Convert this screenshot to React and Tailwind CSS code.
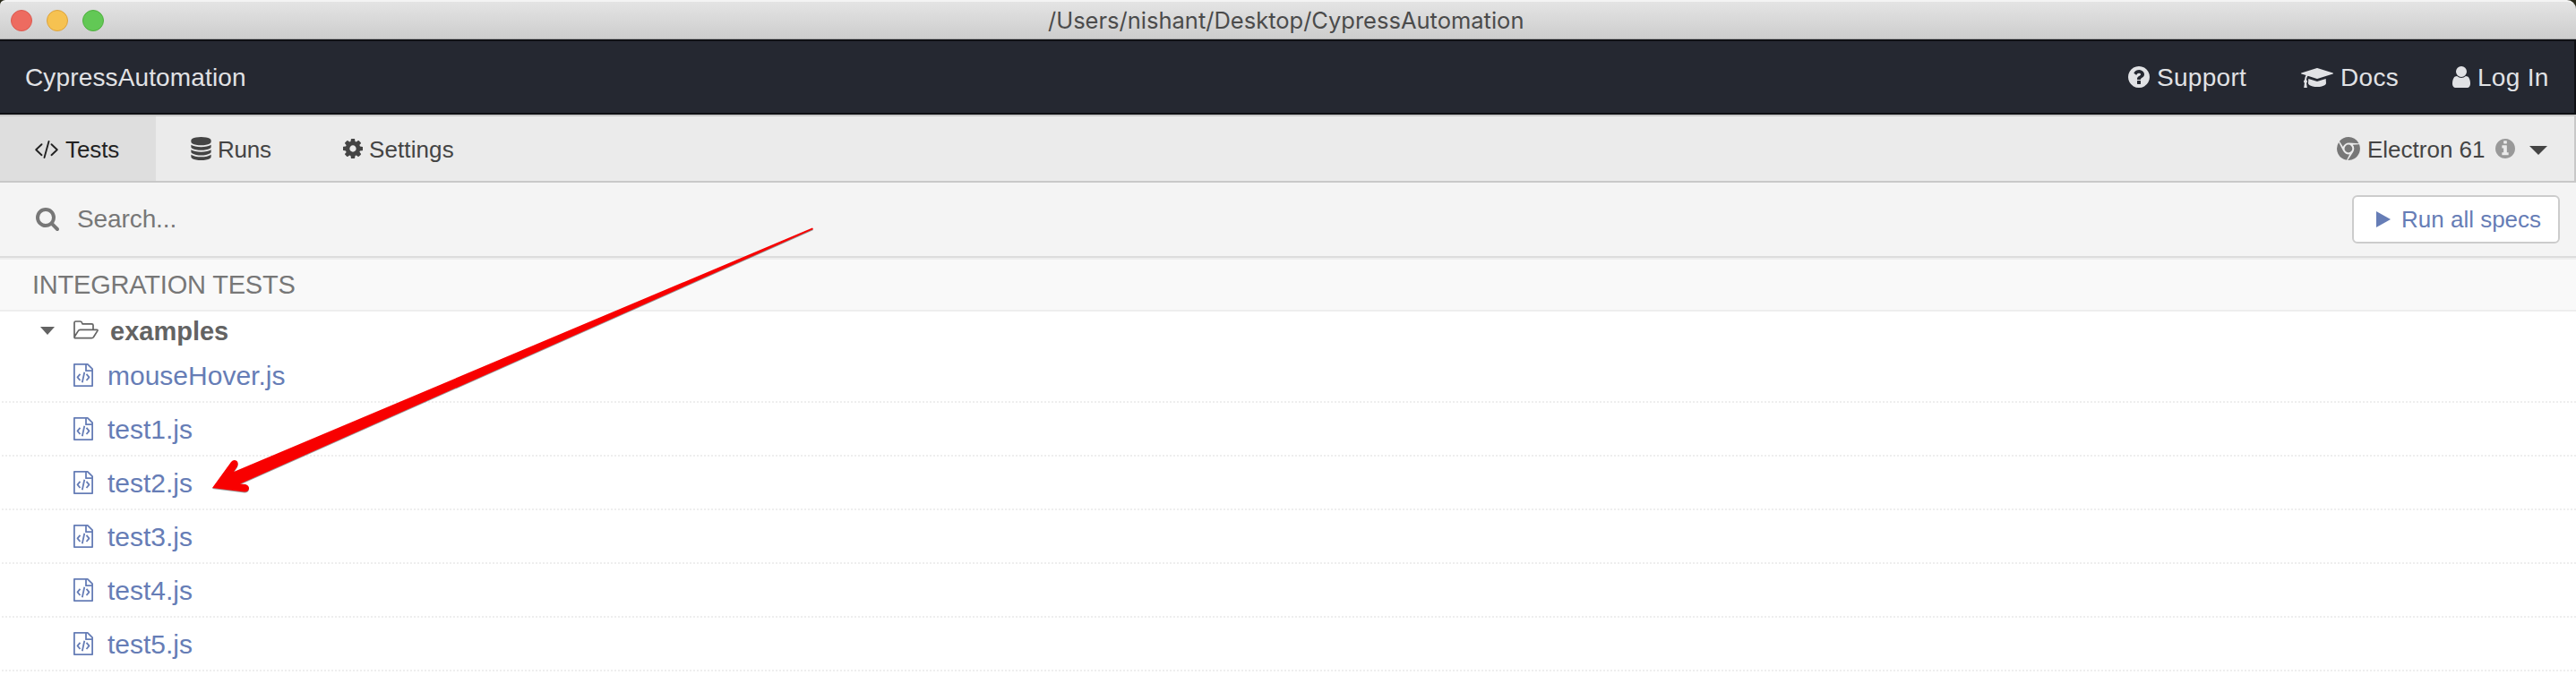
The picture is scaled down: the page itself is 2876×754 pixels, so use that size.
const FA = {
  question: "M1024 1376v-192q0-14-9-23t-23-9h-192q-14 0-23 9t-9 23v192q0 14 9 23t23 9h192q14 0 23-9t9-23zm256-672q0-88-55.5-163t-138.5-116-170-41q-243 0-371 213-15 24 8 42l132 100q7 6 19 6 16 0 25-12 53-68 86-92 34-24 86-24 48 0 85.5 26t37.5 59q0 38-20 61t-68 45q-63 28-115.5 86.5t-52.5 125.5v36q0 14 9 23t23 9h192q14 0 23-9t9-23q0-19 21.5-49.5t54.5-49.5q32-18 49-28.5t46-35 44.5-48 28-60.5 12.5-81zm384 192q0 209-103 385.5t-279.5 279.5-385.5 103-385.5-103-279.5-279.5-103-385.5 103-385.5 279.5-279.5 385.5-103 385.5 103 279.5 279.5 103 385.5z",
  info: "M1152 1376v-160q0-14-9-23t-23-9h-96v-512q0-14-9-23t-23-9h-320q-14 0-23 9t-9 23v160q0 14 9 23t23 9h96v320h-96q-14 0-23 9t-9 23v160q0 14 9 23t23 9h448q14 0 23-9t9-23zm-128-896v-160q0-14-9-23t-23-9h-192q-14 0-23 9t-9 23v160q0 14 9 23t23 9h192q14 0 23-9t9-23zm640 416q0 209-103 385.5t-279.5 279.5-385.5 103-385.5-103-279.5-279.5-103-385.5 103-385.5 279.5-279.5 385.5-103 385.5 103 279.5 279.5 103 385.5z",
  database: "M896 768q237 0 443-43t325-127v170q0 69-103 128t-280 93.5-385 34.5-385-34.5-280-93.5-103-128v-170q119 84 325 127t443 43zm0 768q237 0 443-43t325-127v170q0 69-103 128t-280 93.5-385 34.5-385-34.5-280-93.5-103-128v-170q119 84 325 127t443 43zm0-384q237 0 443-43t325-127v170q0 69-103 128t-280 93.5-385 34.5-385-34.5-280-93.5-103-128v-170q119 84 325 127t443 43zm0-1152q208 0 385 34.5t280 93.5 103 128v128q0 69-103 128t-280 93.5-385 34.5-385-34.5-280-93.5-103-128v-128q0-69 103-128t280-93.5 385-34.5z",
  cog: "M1152 896q0-106-75-181t-181-75-181 75-75 181 75 181 181 75 181-75 75-181zm512-109v222q0 12-8 23t-20 13l-185 28q-19 54-39 91 35 50 107 138 10 12 10 25t-9 23q-27 37-99 108t-94 71q-12 0-26-9l-138-108q-44 23-91 38-16 136-29 186-7 28-36 28h-222q-14 0-24.5-8.5t-11.5-21.5l-28-184q-49-16-90-37l-141 107q-10 9-25 9-14 0-25-11-126-114-165-168-7-10-7-23 0-12 8-23 15-21 51-66.5t54-70.5q-27-50-41-99l-183-27q-13-2-21-12.5t-8-23.5v-222q0-12 8-23t19-13l186-28q14-46 39-92-40-57-107-138-10-12-10-24 0-10 9-23 26-36 98.5-107.5t94.5-71.5q13 0 26 10l138 107q44-23 91-38 16-136 29-186 7-28 36-28h222q14 0 24.5 8.5t11.5 21.5l28 184q49 16 90 37l142-107q9-9 24-9 13 0 25 10 129 119 165 170 7 8 7 22 0 12-8 23-15 21-51 66.5t-54 70.5q26 50 41 98l183 28q13 2 21 12.5t8 23.5z",
  user: "M1536 1399q0 109-62.5 187t-150.5 78h-854q-88 0-150.5-78t-62.5-187q0-85 8.5-160.5t31.5-152 58.5-131 94-89 134.5-34.5q131 128 313 128t313-128q76 0 134.5 34.5t94 89 58.5 131 31.5 152 8.5 160.5zm-256-887q0 159-112.5 271.5t-271.5 112.5-271.5-112.5-112.5-271.5 112.5-271.5 271.5-112.5 271.5 112.5 112.5 271.5z",
  cap: "M1774 1026l18 316q4 69-82 128t-235 93.5-323 34.5-323-34.5-235-93.5-82-128l18-316 574 181q22 7 48 7t48-7zm530-386q0 23-22 31l-1120 352q-4 1-10 1t-10-1l-652-206q-43 34-71 111.5t-34 178.5q63 36 63 109 0 69-58 107l58 433q2 14-8 25-9 11-24 11h-192q-15 0-24-11-10-11-8-25l58-433q-58-38-58-107 0-73 65-111 11-207 98-330l-333-104q-22-8-22-31t22-31l1120-352q4-1 10-1t10 1l1120 352q22 8 22 31z",
  search: "M1216 832q0-185-131.5-316.5t-316.5-131.5-316.5 131.5-131.5 316.5 131.5 316.5 316.5 131.5 316.5-131.5 131.5-316.5zm512 832q0 52-38 90t-90 38q-54 0-90-38l-343-342q-179 124-399 124-143 0-273.5-55.5t-225-150-150-225-55.5-273.5 55.5-273.5 150-225 225-150 273.5-55.5 273.5 55.5 225 150 150 225 55.5 273.5q0 220-124 399l343 343q37 37 37 90z",
  chrome: "M893 0q240-2 451 120 232 134 352 372l-742-39q-160-9-294 74.5t-185 229.5l-276-424q128-159 311-245.5t383-87.5zm-747 405l337 663q72 143 211 217t293 45l-230 451q-212-33-385-157.5t-272.5-316-99.5-411.5q0-267 146-491zm1580 169q58 150 59.5 310.5t-48.5 306-153 272-246 209.5q-230 133-498 119l405-623q88-131 82.5-290.5t-106.5-277.5zm-836 20q125 0 213.5 88.5t88.5 213.5-88.5 213.5-213.5 88.5-213.5-88.5-88.5-213.5 88.5-213.5 213.5-88.5z",
};

function Icon({ name, box = "0 0 1792 1792", className }) {
  return (
    <svg viewBox={box} className={"shrink-0 " + className} fill="currentColor" aria-hidden="true">
      <path d={FA[name]} />
    </svg>
  );
}

function CodeIcon({ className }) {
  return (
    <svg viewBox="0 0 26 20" className={"shrink-0 " + className} fill="none" stroke="currentColor" strokeWidth="1.900" strokeLinecap="round" strokeLinejoin="round" aria-hidden="true">
      <path d="M7.500 4.200L1.200 10.200l6.300 6M18.500 4.200l6.300 6-6.300 6M15.500 1L10.500 19" />
    </svg>
  );
}

function FolderIcon({ className }) {
  return (
    <svg viewBox="0 0 28 21" className={"shrink-0 " + className} fill="none" stroke="currentColor" strokeWidth="1.700" strokeLinejoin="round" aria-hidden="true">
      <path d="M1 18.500V2.500Q1 1 2.500 1H7.500Q9 1 9.400 2.200L10 3.800H20.500Q22 3.800 22 5.300V10M1 18.500L5.300 11.600Q6 10.400 7.500 10.400H26.200Q27.400 10.400 26.800 11.600L22.600 18.300Q21.800 19.700 20.300 19.700H2Q1 19.700 1 18.500Z" />
    </svg>
  );
}

function FileIcon({ className }) {
  return (
    <svg viewBox="0 0 22 26" className={"shrink-0 " + className} fill="none" stroke="currentColor" strokeWidth="1.800" strokeLinejoin="round" aria-hidden="true">
      <path d="M.9.900H15.800L21.100 6.200V25.100H.9zM14 .9V8.200H21.100M7.500 11.800l-3 3.600 3 3.600M14.500 11.800l3 3.600-3 3.600M12.300 9.800L9.800 21.300" />
    </svg>
  );
}

const FILES = ["mouseHover.js", "test1.js", "test2.js", "test3.js", "test4.js", "test5.js"];

export default function App() {
  return (
    <div className="relative flex h-[754px] w-[2876px] flex-col overflow-hidden bg-white font-['Liberation_Sans',Arial,sans-serif] leading-none">
      <div className="h-11 shrink-0 bg-[#2a2a1c]">
        <div className="flex h-11 items-center rounded-tl-[6px] rounded-tr-[10px] border-t-2 border-b border-t-[#f4f4f4] border-b-[#a8a8a8] bg-linear-to-b from-[#e4e4e4] to-[#cdcdcd] pl-3">
          <div className="flex w-[1158px] gap-4">
            <span className="size-6 rounded-full border border-[#dc5a50] bg-[#ed6b60]" />
            <span className="size-6 rounded-full border border-[#dda33c] bg-[#f6c251]" />
            <span className="size-6 rounded-full border border-[#4fb03f] bg-[#62c855]" />
          </div>
          <span className="font-['Inter','Liberation_Sans',sans-serif] text-[25.5px] whitespace-nowrap text-[#4b4b4b]">/Users/nishant/Desktop/CypressAutomation</span>
        </div>
      </div>

      <header className="flex h-[84px] shrink-0 items-center justify-between border-y-2 border-r-2 border-[#0f1014] bg-[#252831] pl-7 text-[28px] whitespace-nowrap text-[#e1e2e5]">
        <span className="pt-0.5 tracking-[0.14px]">CypressAutomation</span>
        <nav className="flex w-[498px] items-center tracking-[0.3px]">
          <span className="flex w-[193px] items-center gap-2"><Icon name="question" box="128 128 1536 1536" className="size-6" /><span className="pt-0.5">Support</span></span>
          <span className="flex w-[169px] items-center gap-2"><Icon name="cap" box="0 128 2304 1536" className="h-6 w-9" /><span className="pt-0.5">Docs</span></span>
          <span className="flex items-center gap-2"><Icon name="user" box="256 128 1280 1536" className="h-6 w-5" /><span className="pt-0.5">Log In</span></span>
        </nav>
      </header>

      <div className="flex h-[76px] shrink-0 items-stretch border-t-2 border-r-2 border-b-2 border-[#c8c8c8] bg-[#ebebeb] text-[26px] whitespace-nowrap text-[#444]">
        <div className="flex w-[174px] items-center gap-2 bg-[#dedede] pl-[39px] text-[#222]"><CodeIcon className="mt-0.5 h-5 w-[26px]" /><span className="pt-0.5 tracking-[-0.1px]">Tests</span></div>
        <div className="flex w-[209px] items-center gap-[7px] pl-[39px]"><Icon name="database" box="128 0 1536 1792" className="h-[26px] w-[23px]" /><span className="pt-0.5 tracking-[-0.2px]">Runs</span></div>
        <div className="flex items-center gap-[7px]"><Icon name="cog" box="128 128 1536 1536" className="size-[22px]" /><span className="pt-0.5 tracking-[0.1px]">Settings</span></div>
        <div className="ml-auto flex w-[265px] items-center">
          <Icon name="chrome" className="mr-2 size-[26px] text-[#777]" />
          <span className="w-[143px] pt-0.5">Electron 61</span>
          <Icon name="info" box="128 128 1536 1536" className="mr-4 size-[22px] text-[#999]" />
          <svg viewBox="0 0 20 10" className="mt-1 h-[10px] w-5" fill="currentColor"><path d="M0 0h20L10 10z" /></svg>
        </div>
      </div>

      <div className="flex h-21 shrink-0 items-center justify-between border-b-2 border-[#dcdcdc] bg-[#f4f4f4] pr-[18px] pl-10">
        <div className="flex items-center text-[28px] text-[#777]">
          <Icon name="search" box="64 128 1664 1664" className="mr-5 size-[26px]" />
          <span className="tracking-[-0.1px]">Search...</span>
        </div>
        <button className="flex h-[54px] w-[232px] items-center gap-3 rounded-md border-2 border-[#ccc] bg-white pl-[25px] text-[26px] whitespace-nowrap text-[#667db6]">
          <svg viewBox="0 0 16 18" className="h-[18px] w-4" fill="currentColor"><path d="M0 0L16 9 0 18z" /></svg>
          <span>Run all specs</span>
        </button>
      </div>

      <div className="flex h-15 shrink-0 items-center border-y-2 border-[#eee] bg-[#f9f9f9] pl-9 text-[29px] tracking-[-0.2px] text-[#777]">INTEGRATION TESTS</div>

      <div className="flex h-[42px] shrink-0 items-center pl-[45px] text-[29px] font-bold text-[#636363]">
        <svg viewBox="0 0 16 9" className="h-[9px] w-4" fill="currentColor"><path d="M0 0h16L8 9z" /></svg>
        <FolderIcon className="mr-[13px] mb-0.5 ml-[21px] h-[21px] w-7" />
        <span className="pt-0.5">examples</span>
      </div>
      <ul className="ml-0.5 text-[30px] text-[#667db6]">
        {FILES.map((f) => (
          <li key={f} className="flex h-15 items-center border-b-2 border-dotted border-[#eee] pl-20">
            <FileIcon className="mr-4 h-[26px] w-[22px]" />
            <span className="pt-0.5">{f}</span>
          </li>
        ))}
      </ul>

      <svg viewBox="0 0 700 320" className="pointer-events-none absolute top-[240px] left-[220px] h-[320px] w-[700px] drop-shadow-[0_1px_0.5px_rgba(0,0,0,0.4)]" aria-hidden="true">
        <path d="M687 14.500L688 16L48 300.500L54 301Q58 302 58 305.500Q57.500 309.500 53 309.500L17 305L38 276Q41 272.500 44.500 275Q46.500 277 45 281L41 287Z" fill="#f80000" />
      </svg>
    </div>
  );
}
